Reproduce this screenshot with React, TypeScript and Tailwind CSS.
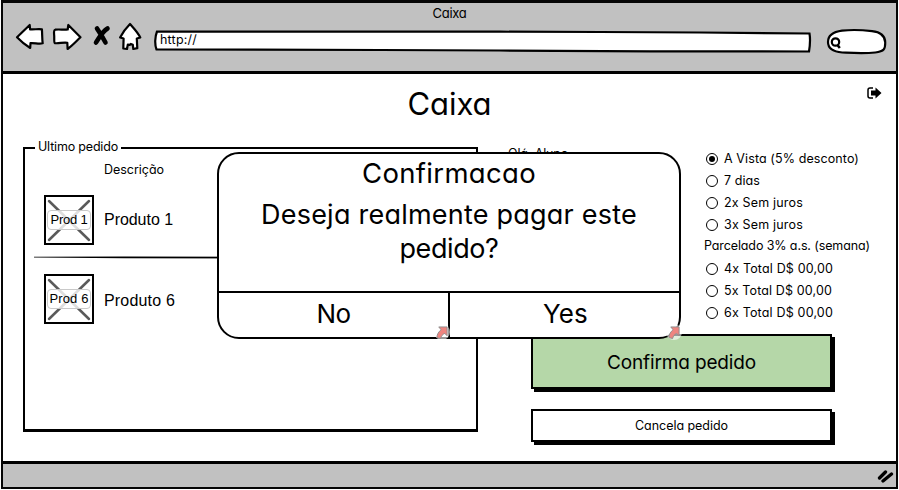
import { useLayoutEffect, useRef, useState, type ReactNode } from "react";

const SANS = "font-['Inter','Liberation_Sans',sans-serif] [font-feature-settings:'cv11']";

/** One line of text, tracked so that it fills the given width. */
function Label({ children, width, className = "" }: { children: string; width: number; className?: string }) {
  const ref = useRef<HTMLSpanElement>(null);
  const [tracking, setTracking] = useState(0);
  useLayoutEffect(() => {
    const natural = ref.current!.getBoundingClientRect().width;
    setTracking((t) => t + (width - natural) / children.length);
  }, [children, width]);
  return (
    <span ref={ref} className={`inline-block shrink-0 whitespace-nowrap ${className}`} style={{ letterSpacing: tracking }}>
      {children}
    </span>
  );
}

function NavIcons() {
  return (
    <svg width="128" height="30" viewBox="15 22 128 30" fill="white" stroke="black" strokeWidth="2.200" strokeLinejoin="round" strokeLinecap="round" className="shrink-0">
      <path d="M17 37.300 29.700 25l.4 4.300c4 .4 8-.6 11.800 0 .4 5 .1 9 .8 14-4 1-8-.6-12.200-.2l-.3 4.900C26 45.500 21 41.500 17 37.300Z" />
      <path d="M80.500 37.300 68.300 25l-.6 4.500c-4 .6-8-.4-12.500.2-1.800.4-1.200 3-1 6 .2 3-.4 7 .8 7.500 4 .4 8-1 12.300-.4l.3 6.200C72 46 76 41.500 80.500 37.300Z" />
      <path d="M97 28.500c2.500 4 5 7.500 8.500 14M107.500 28.500c-5.500 3.500-7.500 8-11.500 14" strokeWidth="4.600" />
      <path d="M130 24c3.500 4 7.500 8 10.300 13.500l-3.500 1 .5 9.700-4 .8-.5-4.200-2-.9-.8.900-2.200-.2-.8 4.400-3.700-.5.300-10-3.500-1C122.500 33 126 28 130 24Z" />
    </svg>
  );
}

function AddressBar() {
  return (
    <div className="relative ml-[10px] mt-[9px] flex h-[23px] w-[659px] items-center pl-[7px]">
      <svg className="absolute inset-0" width="659" height="23" viewBox="153 30 659 23" fill="white" stroke="black" strokeWidth="2.200">
        <path d="M157 31.500 500 31.700 600 32 700 32.500 809.500 33.500c1 6 .5 12-.5 18L650 51.300 500 50.500 380 50 156.500 49.500c-2-5-1.500-13 .5-18Z" />
      </svg>
      <Label width={37} className="relative mt-[-2px] text-[12.500px]">http://</Label>
    </div>
  );
}

function SearchBox() {
  return (
    <svg className="ml-[14px] mt-[9px] shrink-0" width="62" height="28" viewBox="826 27 62 28" fill="white" stroke="black" strokeWidth="2.200">
      <path d="M828 41c0-6 5-10 14-11.300 8-1 20-.8 30 .5 9 1 13 5 13.200 11 .2 7-1 9.300-10 10.300-12 1.200-22 .5-33 0C833 50.700 828 47.500 828 41Z" />
      <circle cx="835.500" cy="41" r="3.700" />
      <path d="m837.500 44 2.300 3" strokeWidth="2.500" />
    </svg>
  );
}

function Product({ tag, tagWidth, name, nameWidth, nameClass }: { tag: string; tagWidth: number; name: string; nameWidth: number; nameClass: string }) {
  return (
    <div className="flex items-center">
      <div className="relative flex h-[50px] w-[50px] items-center justify-center border-2 border-black">
        <svg className="absolute inset-0" width="46" height="46" stroke="#5a5a5a" strokeWidth="2.500" strokeLinecap="round">
          <path d="M3 4 43 43M43 4 3 43" />
        </svg>
        <div className="relative flex h-[20px] w-[44px] shrink-0 items-center justify-center rounded-[4px] border border-[#c9c9c9] bg-white/80">
          <Label width={tagWidth} className="font-['Liberation_Sans',sans-serif] text-[13px]">{tag}</Label>
        </div>
      </div>
      <Label width={nameWidth} className={`ml-[10px] font-['Liberation_Sans',sans-serif] text-[16px] ${nameClass}`}>{name}</Label>
    </div>
  );
}

function Option({ children, width, checked = false }: { children: string; width: number; checked?: boolean }) {
  return (
    <div className="flex h-[22px] items-center pl-[2px]">
      <span className="mr-[6px] flex h-[12px] w-[12px] items-center justify-center rounded-full border-[1.400px] border-black">
        {checked && <span className="h-[6px] w-[6px] rounded-full bg-black" />}
      </span>
      <Label width={width} className="text-[12.500px]">{children}</Label>
    </div>
  );
}

function SketchButton({ children, className }: { children: ReactNode; className: string }) {
  return (
    <button className={`flex w-[301px] items-center justify-center border-2 border-black ${className}`}>{children}</button>
  );
}

function LinkMark() {
  return (
    <span className="flex h-[16px] w-[16px] items-center justify-center rounded-full bg-white/60">
      <svg width="12" height="13" viewBox="0 0 12 14">
        <path d="M2.500 1h9v9.500L9 8C6.500 9 5 11 4.500 13.500L.5 12.500C.5 9 2.500 6 5 4Z" fill="#ee8580" stroke="#8c8c8c" strokeWidth="1" />
      </svg>
    </span>
  );
}

function Dialog() {
  return (
    <div className="absolute left-[217px] top-[152px] flex h-[187px] w-[464px] flex-col rounded-[22px] border-2 border-black bg-white">
      <div className="flex h-[137px] flex-col items-center pt-px">
        <Label width={174} className="h-[37px] text-[27.500px] leading-[37px]">Confirmacao</Label>
        <Label width={376} className="mt-[6px] h-[34px] text-[27px] leading-[34px]">Deseja realmente pagar este</Label>
        <Label width={99} className="h-[34px] text-[27px] leading-[34px]">pedido?</Label>
      </div>
      <div className="flex flex-1 border-t-2 border-black">
        <button className="flex w-[231px] items-center justify-center border-r-2 border-black pb-[4px]">
          <Label width={34} className="text-[26px]">No</Label>
        </button>
        <button className="flex flex-1 items-center justify-center pb-[4px] pl-[2px]">
          <Label width={45} className="text-[26px]">Yes</Label>
        </button>
      </div>
      <span className="absolute bottom-[-3px] left-[215px]"><LinkMark /></span>
      <span className="absolute bottom-[-3px] right-[-3px]"><LinkMark /></span>
    </div>
  );
}

export default function App() {
  return (
    <div className={`relative h-[490px] w-[899px] overflow-hidden bg-white pl-px ${SANS} text-black`}>
      <div className="flex h-[489px] w-[897px] flex-col border-2 border-t-[3px] border-[#050505]">
        <header className="flex h-[71px] shrink-0 flex-col border-b-[3px] border-black bg-[#c1c1c1]">
          <div className="flex h-[21px] items-center justify-center">
            <Label width={34} className="text-[13px]">Caixa</Label>
          </div>
          <div className="mt-[-2px] flex h-[30px] items-center pl-[12px]">
            <NavIcons />
            <AddressBar />
            <SearchBox />
          </div>
        </header>

        <main className="flex flex-1 flex-col">
          <div className="grid h-[73px] grid-cols-[1fr_auto_1fr]">
            <span />
            <Label width={84} className="pt-[8px] text-[31px] leading-[44px]">Caixa</Label>
            <svg className="mr-[14px] mt-[13px] justify-self-end" width="15" height="12" viewBox="0 0 15 12">
              <path d="M6 1H3Q1 1 1 3v6q0 2 2 2h3" fill="none" stroke="black" strokeWidth="1.500" />
              <path d="M4 3.500h4.500V0.500L14.500 6 8.500 11.500v-3H4Z" />
            </svg>
          </div>

          <div className="flex">
            <section className="ml-[20px] h-[285px] w-[455px] border-2 border-b-[3px] border-black">
              <h2 className="ml-[10px] mt-[-12px] flex h-[20px] w-[86px] items-center bg-white pl-[3px]">
                <Label width={80} className="text-[12.500px]">Ultimo pedido</Label>
              </h2>
              <div className="ml-[79px] mt-[3px] flex h-[20px] items-center">
                <Label width={60} className="text-[12.500px]">Descrição</Label>
              </div>
              <div className="ml-[19px] mt-[15px]">
                <Product tag="Prod 1" tagWidth={37} name="Produto 1" nameWidth={69} nameClass="" />
              </div>
              <svg className="ml-[9px] mt-[11px] block" width="400" height="3" viewBox="0 0 400 3">
                <path d="M0 .7 90 .5 400 1v1.800L90 2.200 0 1.500Z" />
              </svg>
              <div className="ml-[19px] mt-[15px]">
                <Product tag="Prod 6" tagWidth={39} name="Produto 6" nameWidth={71} nameClass="mt-[4px]" />
              </div>
            </section>

            <section className="ml-[53px] flex w-[350px] flex-col">
              <div className="flex h-[187px] justify-between">
                <Label width={60} className="ml-[-23px] mt-[-1px] h-[7px] overflow-hidden text-[12.500px] leading-[16px]">Olá, Aluno</Label>
                <div className="mt-px w-[177px]">
                  <Option width={135} checked>A Vista (5% desconto)</Option>
                  <Option width={36}>7 dias</Option>
                  <Option width={79}>2x Sem juros</Option>
                  <Option width={79}>3x Sem juros</Option>
                  <div className="flex h-[22px] items-center pb-[2px]">
                    <Label width={166} className="text-[12.500px]">Parcelado 3% a.s. (semana)</Label>
                  </div>
                  <Option width={109}>4x Total D$ 00,00</Option>
                  <Option width={108}>5x Total D$ 00,00</Option>
                  <Option width={109}>6x Total D$ 00,00</Option>
                </div>
              </div>
              <SketchButton className="h-[55px] bg-[#b5d7a8] pt-[4px] shadow-[3px_3px_0_black]">
                <Label width={149} className="text-[19px]">Confirma pedido</Label>
              </SketchButton>
              <SketchButton className="mt-[20px] h-[33px] bg-white pt-[2px] shadow-[3px_3px_0_black]">
                <Label width={93} className="text-[12.500px]">Cancela pedido</Label>
              </SketchButton>
            </section>
          </div>
        </main>

        <footer className="flex h-[26px] shrink-0 items-center justify-end border-t-[3px] border-black bg-[#c1c1c1] pr-[2px]">
          <svg width="17" height="14" viewBox="0 0 17 14" stroke="black" strokeWidth="3.300" strokeLinecap="round">
            <path d="M2.500 9 8.500 3M6 12 14.500 5" />
          </svg>
        </footer>
      </div>
      <Dialog />
    </div>
  );
}
